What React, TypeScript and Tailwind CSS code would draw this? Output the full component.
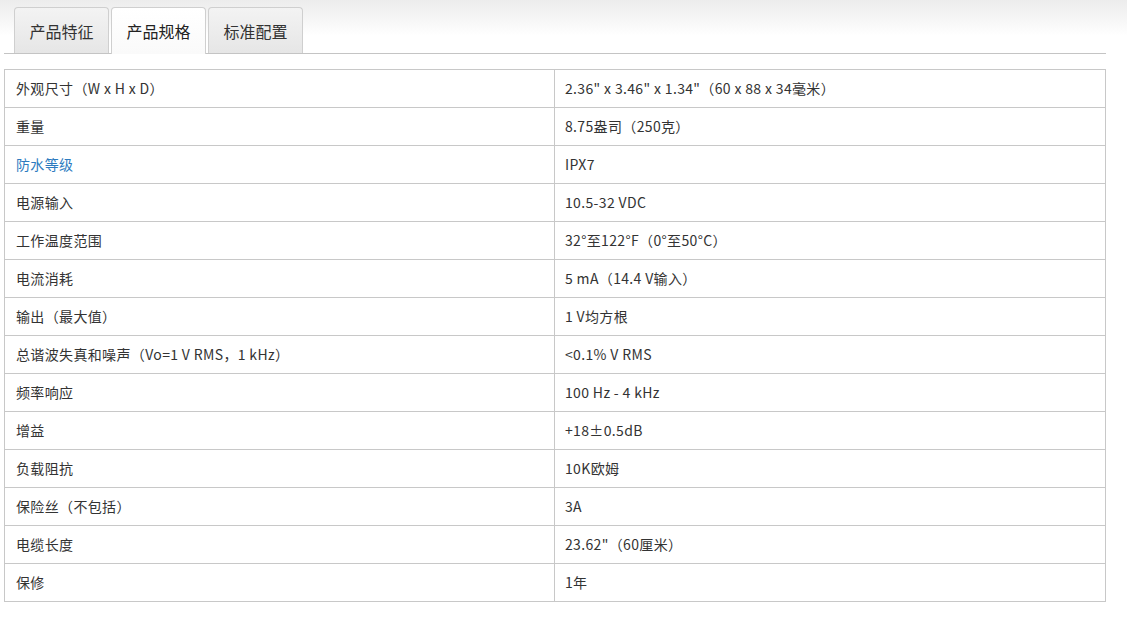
import React from "react";

const rows: [string, string, boolean?][] = [
  ["外观尺寸（W x H x D）", "2.36\" x 3.46\" x 1.34\"（60 x 88 x 34毫米）"],
  ["重量", "8.75盎司（250克）"],
  ["防水等级", "IPX7", true],
  ["电源输入", "10.5-32 VDC"],
  ["工作温度范围", "32°至122°F（0°至50°C）"],
  ["电流消耗", "5 mA（14.4 V输入）"],
  ["输出（最大值）", "1 V均方根"],
  ["总谐波失真和噪声（Vo=1 V RMS，1 kHz）", "<0.1% V RMS"],
  ["频率响应", "100 Hz - 4 kHz"],
  ["增益", "+18±0.5dB"],
  ["负载阻抗", "10K欧姆"],
  ["保险丝（不包括）", "3A"],
  ["电缆长度", "23.62\"（60厘米）"],
  ["保修", "1年"],
];

const tabs = ["产品特征", "产品规格", "标准配置"];

export default function App() {
  return (
    <div
      className="w-[1127px] h-[617px] bg-[linear-gradient(to_bottom,#ececec_0px,#ffffff_36px,#ffffff_100%)] text-[#333] overflow-hidden font-['Noto_Sans_CJK_SC','Noto_Sans',sans-serif]"
    >
      <div className="ml-[4px] w-[1102px] pt-[7px]">
        <div className="flex gap-[2px] pl-[10px] border-b border-[#c4c4c4] h-[47px]">
          {tabs.map((t, i) => (
            <div
              key={t}
              className={
                i === 1
                  ? "w-[95px] h-[47px] -mb-px flex items-center justify-center border border-b-0 border-[#cfcfcf] rounded-t-[4px] bg-gradient-to-b from-white to-[#fafafa] text-[16px] text-[#222]"
                  : "w-[95px] h-[46px] flex items-center justify-center border border-b-0 border-[#cfcfcf] rounded-t-[4px] bg-gradient-to-b from-[#f3f3f3] to-[#e6e6e6] text-[16px] text-[#333]"
              }
            >
              {t}
            </div>
          ))}
        </div>
        <table className="mt-[15px] w-[1102px] border-collapse border border-[#c8c8c8] text-[14px] tracking-[0.35px]">
          <tbody>
            {rows.map(([k, v, link]) => (
              <tr key={k} className="h-[38px]">
                <td className={"w-[550px] border border-[#c8c8c8] pl-[11px] py-0 " + (link ? "text-[#2d7bbf]" : "")}>{k}</td>
                <td className="border border-[#c8c8c8] pl-[10px] py-0">{v}</td>
              </tr>
            ))}
          </tbody>
        </table>
      </div>
    </div>
  );
}
